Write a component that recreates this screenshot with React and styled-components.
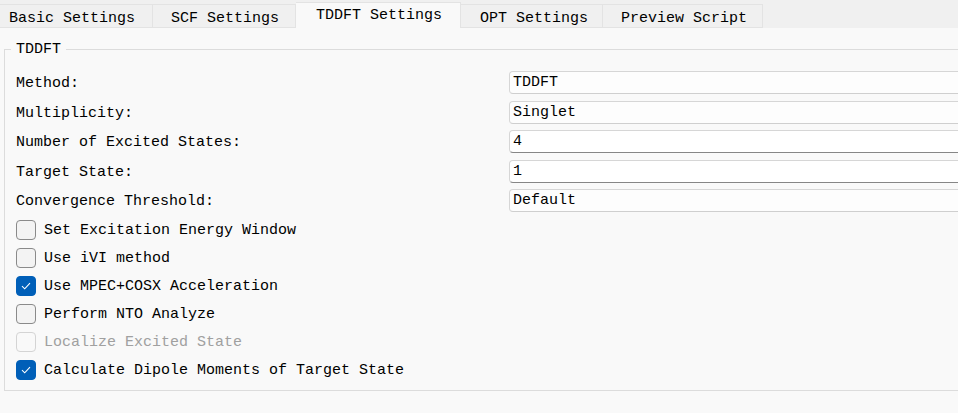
import React from "react";
import styled, { createGlobalStyle } from "styled-components";

//* Data *//
const tabs = [
  { label: "Basic Settings", width: 153, pad: 9 },
  { label: "SCF Settings", width: 143, pad: 18 },
  { label: "TDDFT Settings", width: 165, pad: 20, active: true },
  { label: "OPT Settings", width: 142, pad: 19 },
  { label: "Preview Script", width: 160, pad: 18 },
];

const fields = [
  { label: "Method:", value: "TDDFT", kind: "combo" },
  { label: "Multiplicity:", value: "Singlet", kind: "combo" },
  { label: "Number of Excited States:", value: "4", kind: "spin" },
  { label: "Target State:", value: "1", kind: "spin" },
  { label: "Convergence Threshold:", value: "Default", kind: "combo" },
];

const options = [
  { label: "Set Excitation Energy Window" },
  { label: "Use iVI method" },
  { label: "Use MPEC+COSX Acceleration", checked: true },
  { label: "Perform NTO Analyze" },
  { label: "Localize Excited State", disabled: true },
  { label: "Calculate Dipole Moments of Target State", checked: true },
];

const Check = () => (
  <svg width="10" height="8" viewBox="0 0 10 8">
    <path d="M1 4.2 L3.7 6.8 L9 1.2" fill="none" stroke="#fff" strokeWidth="1.1" />
  </svg>
);

const App = () => {
  return (
    <Window>
      <GlobalStyle />
      <TabBar>
        {tabs.map((t) => (
          <Tab key={t.label} $active={t.active} $w={t.width} $pad={t.pad}>
            {t.label}
          </Tab>
        ))}
      </TabBar>

      <Pane>
        <Group>
          <Legend>TDDFT</Legend>
          <FormGrid>
            {fields.map((f) => (
              <React.Fragment key={f.label}>
                <Label>{f.label}</Label>
                <Field $kind={f.kind}>{f.value}</Field>
              </React.Fragment>
            ))}
          </FormGrid>

          <OptionList>
            {options.map((o) => (
              <Option key={o.label} $disabled={o.disabled}>
                <Box $checked={o.checked} $disabled={o.disabled}>
                  {o.checked && <Check />}
                </Box>
                <OptionText>{o.label}</OptionText>
              </Option>
            ))}
          </OptionList>
        </Group>
      </Pane>
    </Window>
  );
};

export default App;

//* Styled Components *//

const GlobalStyle = createGlobalStyle`
  html, body {
    margin: 0;
    padding: 0;
    background: #f0f0f0;
  }
  body {
    font-family: "Liberation Mono", "Courier New", monospace;
    font-size: 15px;
    color: #000;
  }
`;

const Window = styled.div`
  width: 958px;
  height: 413px;
  display: flex;
  flex-direction: column;
  overflow: hidden;
  background: #f0f0f0;
`;

const TabBar = styled.div`
  display: flex;
  align-items: flex-end;
  height: 28px;
  flex-shrink: 0;
`;

const Tab = styled.div`
  box-sizing: border-box;
  width: ${(p) => p.$w}px;
  height: ${(p) => (p.$active ? 26 : 24)}px;
  padding: ${(p) => (p.$active ? "2px" : "3px")} 0 0 ${(p) => p.$pad}px;
  line-height: 21px;
  border-top: 1px solid #e3e3e3;
  border-right: 1px solid #e3e3e3;
  border-bottom: ${(p) => (p.$active ? "none" : "1px solid #e3e3e3")};
  background: ${(p) => (p.$active ? "#f9f9f9" : "#f0f0f0")};
  white-space: nowrap;
`;

const Pane = styled.div`
  flex: 1;
  background: #f9f9f9;
  padding: 11px 0 0 4px;
`;

const Group = styled.fieldset`
  margin: 0 -60px 0 0;
  padding: 0 0 6px 6px;
  border: 1px solid #dcdcdc;
  border-radius: 0;
`;

const Legend = styled.legend`
  box-sizing: border-box;
  height: 20px;
  padding: 2px 5px 0;
  line-height: 18px;
`;

const FormGrid = styled.div`
  display: grid;
  grid-template-columns: 493px 1fr;
  row-gap: 6.5px;
  padding: 12px 0 0 5px;
  align-items: center;
`;

const Label = styled.div`
  box-sizing: border-box;
  height: 23px;
  padding-top: 2px;
  line-height: 21px;
  white-space: nowrap;
`;

const Field = styled.div`
  box-sizing: border-box;
  height: 23px;
  padding: 1px 0 0 3px;
  line-height: 20px;
  border: 1px solid #d6d6d6;
  border-radius: 4px;
  border-bottom-color: ${(p) => (p.$kind === "spin" ? "#868686" : "#cfcfcf")};
  background: ${(p) => (p.$kind === "spin" ? "#ffffff" : "#fdfdfd")};
`;

const OptionList = styled.div`
  display: flex;
  flex-direction: column;
  padding: 4px 0 0 5px;
`;

const Option = styled.label`
  display: flex;
  align-items: center;
  gap: 8px;
  height: 28px;
  color: ${(p) => (p.$disabled ? "#a0a0a0" : "#000")};
  white-space: nowrap;
`;

const OptionText = styled.span`
  padding-top: 1px;
`;

const Box = styled.span`
  box-sizing: border-box;
  width: 20px;
  height: 20px;
  border-radius: 4px;
  display: flex;
  align-items: center;
  justify-content: center;
  border: 1px solid
    ${(p) => (p.$checked ? "#005fb8" : p.$disabled ? "#d4d4d4" : "#8a8a8a")};
  background: ${(p) => (p.$checked ? "#005fb8" : p.$disabled ? "#f9f9f9" : "#f3f3f3")};
`;
